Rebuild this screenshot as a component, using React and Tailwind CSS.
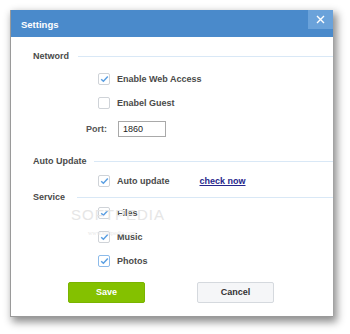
import React from 'react';

const font = { fontFamily: '"Liberation Sans", Arial, sans-serif' };

function Check({ checked, focus }) {
    return (
        <div
            className={`w-[12px] h-[12px] rounded-[2px] border bg-white flex items-center justify-center ${
                focus ? 'border-[#8dbbea]' : 'border-[#cfd3d8]'
            }`}
        >
            {checked && (
                <svg width="9" height="8" viewBox="0 0 9 8">
                    <polyline points="1.2,4.2 3.4,6.3 7.8,1.6" fill="none" stroke="#5a9fe2" strokeWidth="1.5" />
                </svg>
            )}
        </div>
    );
}

function CheckRow({ label, checked, focus, className = '', children }) {
    return (
        <div className={`flex items-center h-[12px] pl-[87px] ${className}`}>
            <Check checked={checked} focus={focus} />
            <span className="ml-[7px] text-[9px] font-bold text-[#4a4a4a] leading-none">{label}</span>
            {children}
        </div>
    );
}

function Header({ title, lineStart, className = '' }) {
    return (
        <div className={`flex items-center h-[12px] pl-[22px] ${className}`}>
            <span className="text-[9px] font-bold text-[#4a4a4a] leading-none">{title}</span>
            <div className="flex-1 h-px bg-[#d9e8f6]" style={{ marginLeft: lineStart }} />
        </div>
    );
}

export default function App() {
    return (
        <div className="w-[350px] h-[334px] bg-white pt-[10px] pl-[10px] overflow-hidden" style={font}>
            <div className="relative w-[323px] h-[307px] bg-white border-l border-b border-[#9a9a9a] shadow-[3px_4px_8px_1px_rgba(0,0,0,0.45)] flex flex-col">
                {/* Title bar */}
                <div className="h-[27px] bg-[#4a8acb] flex items-start justify-between">
                    <span className="mt-[10px] ml-[10px] text-[9.5px] font-bold text-white leading-none">Settings</span>
                    <button className="w-[25px] h-[19px] bg-[#6aa2da] flex items-center justify-center">
                        <svg width="9" height="9" viewBox="0 0 9 9">
                            <path d="M1 1L8 8M8 1L1 8" stroke="white" strokeWidth="1.4" />
                        </svg>
                    </button>
                </div>

                <Header title="Netword" lineStart={9} className="mt-[13px]" />
                <CheckRow label="Enable Web Access" checked className="mt-[11px]" />
                <CheckRow label="Enabel Guest" className="mt-[12px]" />

                <div className="flex items-center h-[16px] mt-[12px] pl-[75px]">
                    <span className="text-[9px] font-bold text-[#555] leading-none">Port:</span>
                    <div className="ml-[11px] w-[48px] h-[16px] border border-[#a9a9a9] bg-white flex items-center pl-[4px]">
                        <span className="text-[9px] text-[#222] leading-none">1860</span>
                    </div>
                </div>

                <Header title="Auto Update" lineStart={7} className="mt-[18px]" />
                <CheckRow label="Auto update" checked className="mt-[8px]">
                    <a className="ml-[30px] text-[9px] font-bold text-[#26268c] underline leading-none">check now</a>
                </CheckRow>
                <Header title="Service" lineStart={12} className="mt-[4px]" />
                <CheckRow label="Files" checked className="mt-[4px]" />
                <CheckRow label="Music" checked className="mt-[12px]" />
                <CheckRow label="Photos" checked focus className="mt-[12px]" />

                <div className="flex mt-[15px] pl-[57px] gap-[52px]">
                    <button className="w-[77px] h-[21px] rounded-[2px] bg-[#84c100] border border-[#7ab400] text-white text-[9px] font-bold">
                        Save
                    </button>
                    <button className="w-[77px] h-[21px] rounded-[2px] bg-[#f5f6f8] border border-[#d5d9de] text-[#333] text-[9px] font-bold">
                        Cancel
                    </button>
                </div>

                {/* watermark */}
                <div className="absolute left-[60px] top-[197px] pointer-events-none text-[#e6e6e6] text-[15px] tracking-[1px] leading-none">
                    SOFTPEDIA
                </div>
                <div className="absolute left-[77px] top-[220px] pointer-events-none text-[#e8e8e8] text-[6px] leading-none" style={{ fontFamily: '"Liberation Serif", serif' }}>
                    www.softpedia.com
                </div>
            </div>
        </div>
    );
}
